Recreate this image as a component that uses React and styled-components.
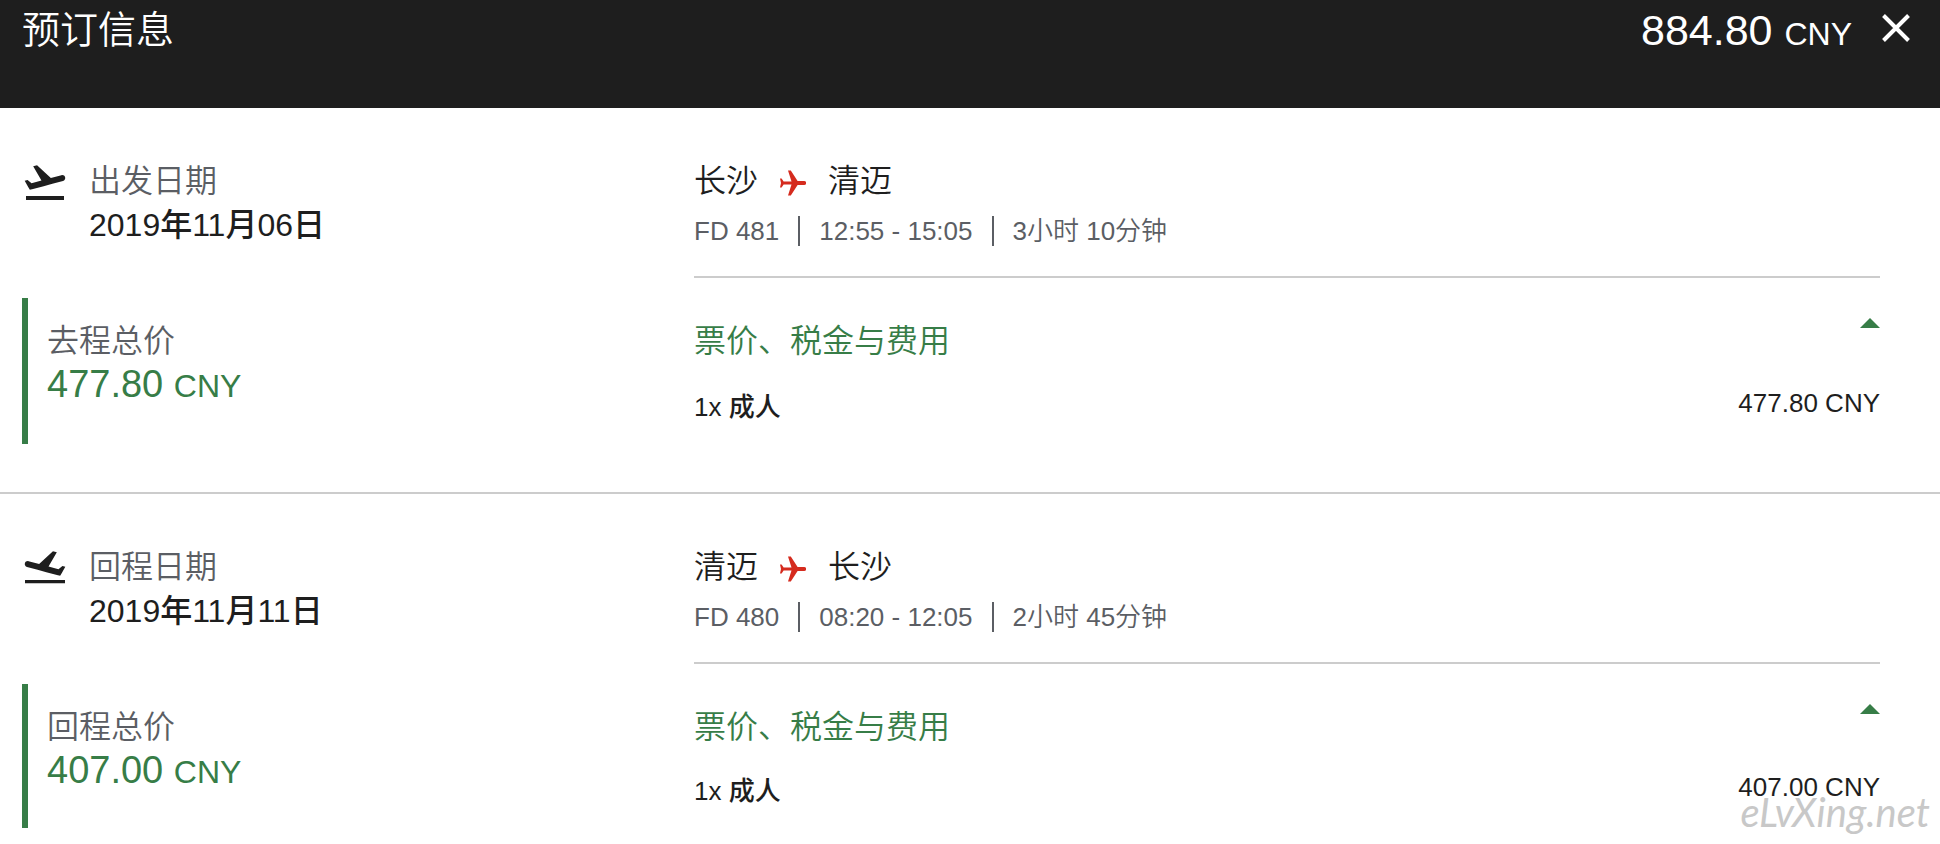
import styled, { createGlobalStyle } from "styled-components";

const flights = [
    {
        id: "depart",
        Icon: TakeoffIcon,
        dateLabel: "出发日期",
        date: "2019年11月06日",
        from: "长沙",
        to: "清迈",
        details: ["FD 481", "12:55 - 15:05", "3小时 10分钟"],
        totalLabel: "去程总价",
        price: "477.80",
    },
    {
        id: "return",
        Icon: LandingIcon,
        dateLabel: "回程日期",
        date: "2019年11月11日",
        from: "清迈",
        to: "长沙",
        details: ["FD 480", "08:20 - 12:05", "2小时 45分钟"],
        totalLabel: "回程总价",
        price: "407.00",
    },
];

const planeBody = "M22.07 9.640c-.21-.8-1.040-1.280-1.840-1.060L14.920 10l-6.900-6.430-1.930.510 4.140 7.170-4.970 1.330-1.970-1.540-1.450.390 1.820 3.160.770 1.330 1.600-.430 5.310-1.420 4.350-1.160L21 11.490c.810-.230 1.280-1.050 1.070-1.850z";

function TakeoffIcon() {
    return (
        <DateIcon viewBox="0 0 46 46" aria-hidden="true">
            <path d={planeBody} transform="translate(-1 -2) scale(2)" />
            <path d="M4 36h38v4H4z" />
        </DateIcon>
    );
}

function LandingIcon() {
    return (
        <DateIcon viewBox="0 0 46 46" aria-hidden="true">
            <path d={planeBody} transform="translate(47 -2) scale(-2 2)" />
            <path d="M3 34h40v3.300H3z" />
        </DateIcon>
    );
}

function Plane() {
    return (
        <PlaneIcon viewBox="0 0 26 26" aria-hidden="true">
            <path d="M0 8.500h1.600l2 3h7.900L8 .500h2.800l6.800 10.500h6.600a2 2 0 0 1 0 4h-6.600l-6.800 10.500H8l3.500-11H3.600l-2 3H0l1-4.500z" />
        </PlaneIcon>
    );
}

function Flight({ Icon, dateLabel, date, from, to, details, totalLabel, price }) {
    return (
        <FlightSection>
            <DateBlock>
                <Icon />
                <div>
                    <Label>{dateLabel}</Label>
                    <DateText>{date}</DateText>
                </div>
            </DateBlock>
            <RouteBlock>
                <Route>
                    <span>{from}</span>
                    <Plane />
                    <span>{to}</span>
                </Route>
                <Details>
                    {details.map((item) => (
                        <li key={item}>{item}</li>
                    ))}
                </Details>
            </RouteBlock>
            <TotalBlock>
                <Label>{totalLabel}</Label>
                <Total>
                    {price} <Currency>CNY</Currency>
                </Total>
            </TotalBlock>
            <FareBlock>
                <FareToggle type="button" aria-expanded="true">
                    票价、税金与费用
                    <Caret />
                </FareToggle>
                <FareRow>
                    <Passenger>1x 成人</Passenger>
                    <FarePrice>{price} CNY</FarePrice>
                </FareRow>
            </FareBlock>
        </FlightSection>
    );
}

function App() {
    return (
        <>
            <GlobalStyle />
            <Page>
                <Header>
                    <Title>预订信息</Title>
                    <HeaderPrice>
                        884.80 <Currency>CNY</Currency>
                    </HeaderPrice>
                    <CloseButton type="button" aria-label="关闭">
                        <svg viewBox="0 0 28 28" aria-hidden="true">
                            <path d="M1.500 1.500l25 25M26.500 1.500l-25 25" />
                        </svg>
                    </CloseButton>
                </Header>
                <main>
                    {flights.map((flight) => (
                        <Flight key={flight.id} {...flight} />
                    ))}
                </main>
                <Watermark>eLvXing.net</Watermark>
            </Page>
        </>
    );
}

const GlobalStyle = createGlobalStyle`
    * {
        box-sizing: border-box;
    }
    body {
        margin: 0;
        background: #fff;
        color: #1e1e1e;
        font-family: "Liberation Sans", "Noto Sans CJK SC", sans-serif;
        font-weight: 350;
    }
`
const Page = styled.div`
    position: relative;
`
const Header = styled.header`
    display: flex;
    align-items: center;
    padding: 4px 30px 52px 22px;
    background: #1e1e1e;
    color: #fff;
`
const Title = styled.h1`
    flex: 1;
    margin: 0;
    font-size: 38px;
    font-weight: 350;
    line-height: 52px;
`
const HeaderPrice = styled.div`
    font-size: 43px;
    line-height: 52px;
`
const Currency = styled.span`
    font-size: 32px;
    line-height: 1;
`
const CloseButton = styled.button`
    display: flex;
    margin-left: 30px;
    padding: 0 0 4px;
    border: 0;
    background: none;
    color: inherit;
    cursor: pointer;
    svg {
        width: 28px;
        height: 28px;
        stroke: currentColor;
        stroke-width: 4;
    }
`
const FlightSection = styled.section`
    display: grid;
    grid-template-columns: 672px 1fr;
    padding: 52px 60px 48px 22px;
    border-bottom: 2px solid #ccc;
    &:last-child {
        padding-bottom: 16px;
        border-bottom: 0;
    }
`
const DateBlock = styled.div`
    display: flex;
    gap: 21px;
`
const DateIcon = styled.svg`
    width: 46px;
    height: 46px;
    fill: #1e1e1e;
`
const Label = styled.div`
    color: #5b5e64;
    font-size: 32px;
    line-height: 42px;
`
const DateText = styled.div`
    font-size: 32px;
    font-weight: 500;
    line-height: 46px;
`
const RouteBlock = styled.div`
    padding-bottom: 30px;
    border-bottom: 2px solid #ccc;
`
const Route = styled.div`
    display: flex;
    align-items: center;
    gap: 22px;
    font-size: 32px;
    line-height: 42px;
`
const PlaneIcon = styled.svg`
    width: 26px;
    height: 26px;
    margin-top: 4px;
    fill: #d52b1e;
`
const Details = styled.ul`
    display: flex;
    margin: 14px 0 0;
    padding: 0;
    list-style: none;
    color: #5b5e64;
    font-size: 26px;
    line-height: 30px;
    li + li {
        margin-left: 19px;
        padding-left: 19px;
        border-left: 2px solid #5b5e64;
    }
`
const TotalBlock = styled.div`
    justify-self: start;
    margin-top: 20px;
    padding: 22px 0 0 19px;
    border-left: 6px solid #377d47;
`
const Total = styled.div`
    color: #377d47;
    font-size: 38px;
    line-height: 44px;
`
const FareBlock = styled.div`
    padding: 40px 0 18px;
`
const FareToggle = styled.button`
    display: flex;
    justify-content: space-between;
    width: 100%;
    padding: 0;
    border: 0;
    background: none;
    color: #377d47;
    font: inherit;
    font-size: 32px;
    line-height: 46px;
    text-align: left;
    cursor: pointer;
`
const Caret = styled.span`
    width: 20px;
    height: 10px;
    background: currentColor;
    clip-path: polygon(50% 0, 100% 100%, 0 100%);
`
const FareRow = styled.div`
    display: flex;
    justify-content: space-between;
    margin-top: 24px;
    font-size: 26px;
    ${FlightSection}:last-child & {
        margin-top: 22px;
    }
`
const Passenger = styled.span`
    font-weight: 500;
    line-height: 38px;
`
const FarePrice = styled.span`
    line-height: 30px;
`
const Watermark = styled.div`
    position: absolute;
    right: 10px;
    bottom: 10px;
    color: #c8c8c8;
    font-family: "Brush Script MT", Lato, sans-serif;
    font-size: 40px;
    font-style: italic;
    font-weight: 400;
    line-height: 44px;
`
export default App;
